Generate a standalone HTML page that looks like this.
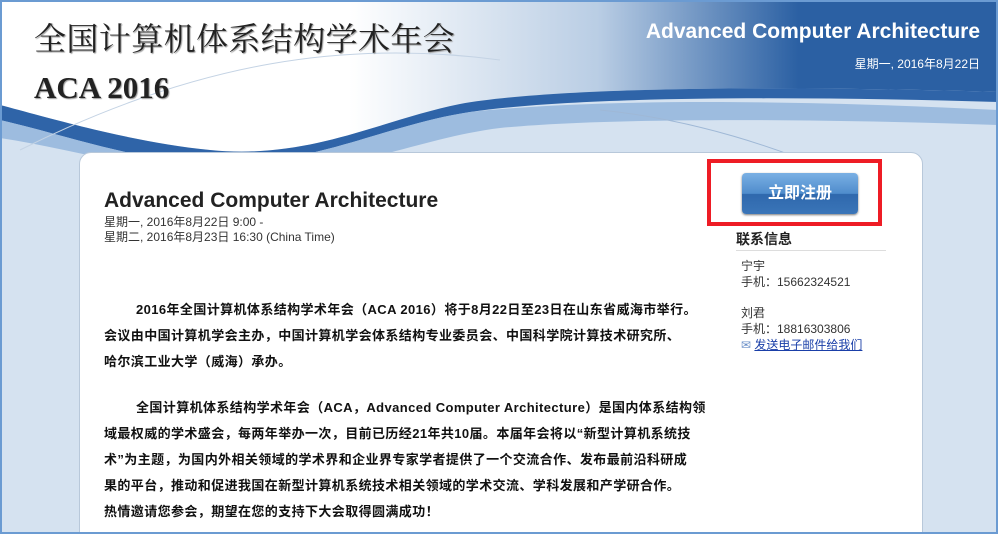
<!DOCTYPE html>
<html><head><meta charset="utf-8"><style>
*{margin:0;padding:0;box-sizing:border-box}
html,body{width:998px;height:534px;overflow:hidden}
body{background:#d5e2f0;font-family:"Liberation Sans","Noto Sans CJK SC",sans-serif;position:relative}
.frame{position:absolute;left:0;top:0;width:998px;height:534px;border:2px solid #6b9bd2;z-index:10;pointer-events:none}
.hdr{position:absolute;left:0;top:0;width:998px;height:200px}
.t1{position:absolute;left:34px;top:14px;font-family:"Liberation Serif","Noto Serif CJK SC",serif;font-size:32px;color:#222;text-shadow:1px 1px 1px #999;letter-spacing:0.4px}
.t2{position:absolute;left:34px;top:70px;font-family:"Liberation Serif",serif;font-weight:bold;font-size:31px;color:#222;text-shadow:1px 1px 1px #999}
.r1{position:absolute;right:18px;top:20px;color:#fff;font-weight:bold;font-size:21px}
.r2{position:absolute;right:18px;top:55px;color:#fff;font-size:12px}
.card{position:absolute;left:79px;top:152px;width:844px;height:400px;background:#fff;border:1px solid #b8c8da;border-radius:12px}
h1{position:absolute;left:104px;top:189px;font-size:21px;font-weight:bold;color:#222}
.d{position:absolute;left:104px;top:215px;font-size:12px;color:#333;line-height:15px}
.p{position:absolute;left:104px;width:620px;font-size:13px;font-weight:bold;line-height:26px;color:#111;white-space:nowrap;letter-spacing:0.4px}
.red{position:absolute;left:707px;top:159px;width:175px;height:67px;border:4px solid #ee1c25}
.btn{position:absolute;left:742px;top:173px;width:116px;height:41px;border-radius:4px;background:linear-gradient(#7ab0e4,#4f8ccc 50%,#2f68ad 52%,#3a75b8);color:#fff;font-weight:bold;font-size:16px;text-align:center;line-height:41px;box-shadow:0 1px 2px #777}
.ct{position:absolute;left:736px;top:229px;width:150px;font-size:14px;font-weight:bold;color:#222;border-bottom:1px solid #ddd;padding-bottom:1px}
.c{position:absolute;left:741px;font-size:12px;color:#333;line-height:16px}
a{color:#1a3fa8}
</style></head><body>
<svg class="hdr" width="998" height="200" viewBox="0 0 998 200">
<defs><linearGradient id="g" x1="0" x2="1" y1="0" y2="0">
<stop offset="0" stop-color="#fff"/><stop offset="0.35" stop-color="#fff"/><stop offset="0.6" stop-color="#b9cde4"/><stop offset="0.8" stop-color="#2b60a3"/><stop offset="1" stop-color="#2b60a3"/></linearGradient></defs>
<rect width="998" height="200" fill="#d5e2f0"/>
<path d="M0 0 L998 0 L998 92 C800 86 560 86 460 104 C380 120 310 160 210 150 C130 142 50 118 0 105Z" fill="url(#g)"/>
<path d="M0 105 C50 118 130 142 210 150 C310 160 380 120 460 104 C560 86 800 86 998 92 L998 102 C800 96 580 96 470 112 C390 124 320 162 230 164 C150 166 70 136 0 120Z" fill="#2f64a8"/>
<path d="M0 120 C70 136 150 166 230 164 C320 162 390 124 470 112 C600 98 800 100 998 110 L998 125 C800 118 600 118 500 128 C420 138 360 170 260 174 C160 178 80 150 0 138Z" fill="#8fb3db" opacity="0.8"/>
<path d="M20 150 C200 60 350 40 500 60" stroke="#c4d3e4" fill="none"/>
<path d="M600 110 C700 120 780 150 830 170" stroke="#9fb8d6" fill="none"/>
</svg>
<div class="t1">全国计算机体系结构学术年会</div>
<div class="t2">ACA 2016</div>
<div class="r1">Advanced Computer Architecture</div>
<div class="r2">星期一, 2016年8月22日</div>
<div class="card"></div>
<h1>Advanced Computer Architecture</h1>
<div class="d">星期一, 2016年8月22日 9:00 -<br>星期二, 2016年8月23日 16:30 (China Time)</div>
<div class="p" style="top:297px"><span style="padding-left:32px"></span>2016年全国计算机体系结构学术年会（ACA 2016）将于8月22日至23日在山东省威海市举行。<br>会议由中国计算机学会主办，中国计算机学会体系结构专业委员会、中国科学院计算技术研究所、<br>哈尔滨工业大学（威海）承办。</div>
<div class="p" style="top:395px"><span style="padding-left:32px"></span>全国计算机体系结构学术年会（ACA，Advanced Computer Architecture）是国内体系结构领<br>域最权威的学术盛会，每两年举办一次，目前已历经21年共10届。本届年会将以“新型计算机系统技<br>术”为主题，为国内外相关领域的学术界和企业界专家学者提供了一个交流合作、发布最前沿科研成<br>果的平台，推动和促进我国在新型计算机系统技术相关领域的学术交流、学科发展和产学研合作。<br>热情邀请您参会，期望在您的支持下大会取得圆满成功！</div>
<div class="red"></div>
<div class="btn">立即注册</div>
<div class="ct">联系信息</div>
<div class="c" style="top:258px">宁宇<br>手机：15662324521</div>
<div class="c" style="top:305px">刘君<br>手机：18816303806<br><span style="color:#6a8fc8">✉</span> <a href="#">发送电子邮件给我们</a></div>
<div class="frame"></div>
</body></html>
